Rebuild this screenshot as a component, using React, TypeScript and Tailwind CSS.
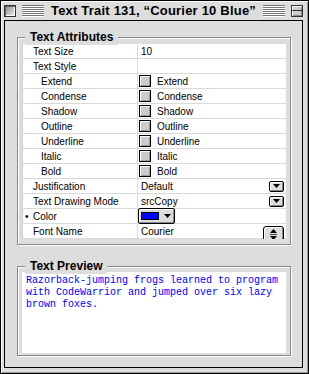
import React from 'react';

/**
 * Text trait inspector window (Mac OS 8 platinum look)
 */

type Row = {
  label: string;
  indent?: boolean;
  bullet?: boolean;
  kind: 'text' | 'check' | 'popup' | 'color' | 'spin' | 'empty';
  value?: string;
};

const rows: Row[] = [
  { label: 'Text Size', kind: 'text', value: '10' },
  { label: 'Text Style', kind: 'empty' },
  { label: 'Extend', indent: true, kind: 'check', value: 'Extend' },
  { label: 'Condense', indent: true, kind: 'check', value: 'Condense' },
  { label: 'Shadow', indent: true, kind: 'check', value: 'Shadow' },
  { label: 'Outline', indent: true, kind: 'check', value: 'Outline' },
  { label: 'Underline', indent: true, kind: 'check', value: 'Underline' },
  { label: 'Italic', indent: true, kind: 'check', value: 'Italic' },
  { label: 'Bold', indent: true, kind: 'check', value: 'Bold' },
  { label: 'Justification', kind: 'popup', value: 'Default' },
  { label: 'Text Drawing Mode', kind: 'popup', value: 'srcCopy' },
  { label: 'Color', bullet: true, kind: 'color' },
  { label: 'Font Name', kind: 'spin', value: 'Courier' },
];

const sans = "font-['Liberation_Sans',Arial,sans-serif]";

// Horizontal title bar stripes
function Stripes() {
  return (
    <div className="flex-1 flex flex-col">
      {[0, 1, 2, 3, 4, 5].map((i) => (
        <div key={i} className="h-[2px] border-b border-white bg-[#777]" />
      ))}
    </div>
  );
}

function DownTriangle() {
  return (
    <svg width="7" height="4" viewBox="0 0 7 4">
      <polygon points="0,0 7,0 3.5,4" fill="#000" />
    </svg>
  );
}

function Cell({ row }: { row: Row }) {
  switch (row.kind) {
    case 'text':
      return <span className="pl-[3px]">{row.value}</span>;
    case 'check':
      return (
        <div className="flex items-center pl-[1px] gap-[6px]">
          <div className="w-[12px] h-[12px] border border-black bg-[#cccccc] shadow-[inset_1px_1px_0_#fff,inset_-1px_-1px_0_#999]" />
          <span>{row.value}</span>
        </div>
      );
    case 'popup':
      return (
        <div className="flex items-center justify-between w-full pl-[3px] pr-[2px]">
          <span>{row.value}</span>
          <div className="w-[15px] h-[11px] border border-black rounded-[2px] bg-[#dddddd] shadow-[inset_1px_1px_0_#fff,inset_-1px_-1px_0_#888] flex items-center justify-center">
            <DownTriangle />
          </div>
        </div>
      );
    case 'color':
      return (
        <div className="pl-[0px] h-full flex items-center">
          <div className="w-[37px] h-[16px] border border-black rounded-[2px] bg-[#dddddd] shadow-[inset_1px_1px_0_#fff,inset_-1px_-1px_0_#888] flex items-center pl-[2px] gap-[5px]">
            <div className="w-[18px] h-[8px] border border-black bg-[#0000ff]" />
            <DownTriangle />
          </div>
        </div>
      );
    case 'spin':
      return (
        <div className="relative flex items-center w-full h-full pl-[3px]">
          <span>{row.value}</span>
          <div className="absolute right-[2px] top-[2px] w-[21px] h-[18px] border border-black rounded-[3px] bg-[#dddddd] shadow-[inset_1px_1px_0_#fff,inset_-1px_-1px_0_#888] flex flex-col items-center pt-[2px] gap-[1px]">
            <svg width="7" height="4" viewBox="0 0 7 4">
              <polygon points="3.5,0 7,4 0,4" fill="#000" />
            </svg>
            <div className="w-[7px] h-px bg-[#444]" />
            <DownTriangle />
          </div>
        </div>
      );
    default:
      return null;
  }
}

function GroupBox({
  title,
  className,
  children,
}: {
  title: string;
  className: string;
  children: React.ReactNode;
}) {
  return (
    <div
      className={`relative w-[274px] border border-[#888888] shadow-[1px_1px_0_#fff,inset_1px_1px_0_#fff] pl-[4px] ${className}`}
    >
      <div
        className={`absolute left-[7px] top-[-9px] px-[5px] bg-[#dddddd] text-[12px] leading-[16px] font-bold ${sans}`}
      >
        {title}
      </div>
      {children}
    </div>
  );
}

export default function App() {
  return (
    <div className={`w-[309px] h-[374px] bg-[#dddddd] text-black ${sans}`}>
      <div className="w-[309px] h-[374px] border border-black bg-[#dddddd] shadow-[inset_1px_1px_0_#fff,inset_-1px_-1px_0_#999] flex flex-col pl-[3px] pr-[5px] pb-[5px]">
        {/* Title bar */}
        <div className="h-[19px] flex items-center -mr-[2px] pr-[2px] gap-[6px] shrink-0">
          <div className="w-[12px] h-[12px] border border-[#333] bg-[linear-gradient(135deg,#888,#eee)] shadow-[inset_1px_1px_0_#666,inset_-1px_-1px_0_#fff]" />
          <Stripes />
          <div className="text-[13px] leading-[19px] font-bold tracking-[0.2px] whitespace-nowrap px-[1px]">
            Text Trait 131, “Courier 10 Blue”
          </div>
          <Stripes />
          <div className="w-[12px] h-[12px] border border-[#333] bg-[#cccccc] shadow-[inset_1px_1px_0_#fff,inset_-1px_-1px_0_#888] flex flex-col justify-center">
            <div className="h-px bg-[#333]" />
          </div>
        </div>

        {/* Content */}
        <div className="flex-1 border border-black bg-[#dddddd] pl-[12px] pr-[10px] pt-[16px]">
          <GroupBox title="Text Attributes" className="h-[208px] pt-[6px]">
            <div className="w-[264px] bg-white border-l border-[#cfcfcf] overflow-hidden text-[10px]">
              {rows.map((row) => (
                <div key={row.label} className="flex h-[15px] border-b border-[#dadada]">
                  <div
                    className={`w-[115px] border-r border-[#dadada] flex items-center ${
                      row.indent ? 'pl-[18px]' : row.bullet ? 'pl-[2px]' : 'pl-[10px]'
                    }`}
                  >
                    {row.bullet && <span className="w-[8px] text-[10px]">•</span>}
                    {row.label}
                  </div>
                  <div className="flex-1 flex items-center">
                    <Cell row={row} />
                  </div>
                </div>
              ))}
            </div>
          </GroupBox>

          <GroupBox title="Text Preview" className="h-[90px] mt-[21px] pt-[5px]">
            <div className="w-[264px] h-[81px] bg-white pl-[4px] pt-[3px] font-['Liberation_Mono','Courier_New',monospace] text-[10px] leading-[12px] text-[#0000ff]">
              Razorback-jumping frogs learned to program
              <br />
              with CodeWarrior and jumped over six lazy
              <br />
              brown foxes.
            </div>
          </GroupBox>
        </div>
      </div>
    </div>
  );
}
